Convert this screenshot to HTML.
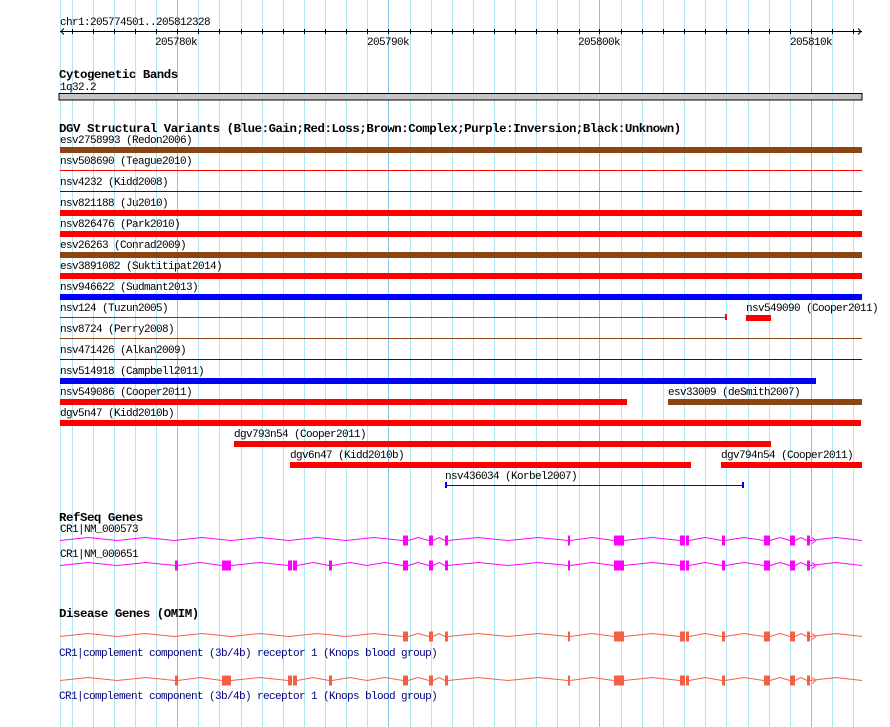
<!DOCTYPE html>
<html><head><meta charset="utf-8"><style>
html,body{margin:0;padding:0;background:#fff;width:890px;height:727px;overflow:hidden}
svg{display:block}
text{font-family:"Liberation Mono",monospace;font-size:11px;letter-spacing:-0.6px;fill:#000}
.h{font-weight:bold;font-size:12.4px;letter-spacing:-0.45px}
.n{fill:#000080}
</style></head><body>
<svg width="890" height="727" viewBox="0 0 890 727" xmlns="http://www.w3.org/2000/svg">
<defs>
<g id="t1">
<path d="M60 0 L88 -3 L117 0 L145 -3 L174 0 L202 -3 L231 0 L260 -3 L289 0 L317 -3 L346 0 L374 -3 L403 0 M408 0 L418 -3 L429 0 M433 0 L439 -3 L445 0 M448 0 L478 -3 L508 0 L538 -3 L568 0 M570 0 L592 -3 L614 0 M624 0 L652 -3 L680 0 M689 0 L705 -3 L722 0 M725 0 L744 -3 L764 0 M770 0 L780 -3 L790 0 M795 0 L801 -3 L807 0 M810 0 L836 -3 L862 0 M812 -3 L816 0 L812 3" fill="none" stroke="currentColor" stroke-width="1"/>
<g fill="currentColor">
<rect x="403" y="-5" width="5" height="10"/><rect x="429" y="-5" width="4" height="10"/><rect x="445" y="-5" width="3" height="10"/><rect x="568" y="-5" width="2" height="10"/><rect x="614" y="-5" width="10" height="10"/><rect x="680" y="-5" width="5" height="10"/><rect x="686" y="-5" width="3" height="10"/><rect x="722" y="-5" width="3" height="10"/><rect x="764" y="-5" width="6" height="10"/><rect x="790" y="-5" width="5" height="10"/><rect x="807" y="-5" width="3" height="10"/>
</g></g>
<g id="t2">
<path d="M60 0 L88 -3 L117 0 L146 -3 L175 0 M178 0 L200 -3 L222 0 M231 0 L260 -3 L288 0 M297 0 L313 -3 L329 0 M332 0 L350 -3 L367 0 L385 -3 L403 0 M408 0 L418 -3 L429 0 M433 0 L439 -3 L445 0 M448 0 L478 -3 L508 0 L538 -3 L568 0 M570 0 L592 -3 L614 0 M624 0 L652 -3 L680 0 M689 0 L705 -3 L722 0 M725 0 L744 -3 L764 0 M770 0 L780 -3 L790 0 M795 0 L801 -3 L807 0 M810 0 L836 -3 L862 0 M812 -3 L816 0 L812 3" fill="none" stroke="currentColor" stroke-width="1"/>
<g fill="currentColor">
<rect x="175" y="-5" width="3" height="10"/><rect x="222" y="-5" width="9" height="10"/><rect x="288" y="-5" width="4" height="10"/><rect x="293" y="-5" width="4" height="10"/><rect x="329" y="-5" width="3" height="10"/>
<rect x="403" y="-5" width="5" height="10"/><rect x="429" y="-5" width="4" height="10"/><rect x="445" y="-5" width="3" height="10"/><rect x="568" y="-5" width="2" height="10"/><rect x="614" y="-5" width="10" height="10"/><rect x="680" y="-5" width="5" height="10"/><rect x="686" y="-5" width="3" height="10"/><rect x="722" y="-5" width="3" height="10"/><rect x="764" y="-5" width="6" height="10"/><rect x="790" y="-5" width="5" height="10"/><rect x="807" y="-5" width="3" height="10"/>
</g></g>
</defs>
<g stroke="#aee8ee" stroke-width="1">
<line x1="60.5" y1="0" x2="60.5" y2="727"/>
<line x1="72.5" y1="0" x2="72.5" y2="727"/><line x1="93.5" y1="0" x2="93.5" y2="727"/><line x1="114.5" y1="0" x2="114.5" y2="727"/><line x1="135.5" y1="0" x2="135.5" y2="727"/><line x1="156.5" y1="0" x2="156.5" y2="727"/>
<line x1="198.5" y1="0" x2="198.5" y2="727"/><line x1="219.5" y1="0" x2="219.5" y2="727"/><line x1="241.5" y1="0" x2="241.5" y2="727"/><line x1="262.5" y1="0" x2="262.5" y2="727"/><line x1="283.5" y1="0" x2="283.5" y2="727"/><line x1="304.5" y1="0" x2="304.5" y2="727"/><line x1="325.5" y1="0" x2="325.5" y2="727"/><line x1="346.5" y1="0" x2="346.5" y2="727"/><line x1="367.5" y1="0" x2="367.5" y2="727"/>
<line x1="410.5" y1="0" x2="410.5" y2="727"/><line x1="431.5" y1="0" x2="431.5" y2="727"/><line x1="452.5" y1="0" x2="452.5" y2="727"/><line x1="473.5" y1="0" x2="473.5" y2="727"/><line x1="494.5" y1="0" x2="494.5" y2="727"/><line x1="515.5" y1="0" x2="515.5" y2="727"/><line x1="536.5" y1="0" x2="536.5" y2="727"/><line x1="557.5" y1="0" x2="557.5" y2="727"/><line x1="579.5" y1="0" x2="579.5" y2="727"/>
<line x1="621.5" y1="0" x2="621.5" y2="727"/><line x1="642.5" y1="0" x2="642.5" y2="727"/><line x1="663.5" y1="0" x2="663.5" y2="727"/><line x1="684.5" y1="0" x2="684.5" y2="727"/><line x1="705.5" y1="0" x2="705.5" y2="727"/><line x1="726.5" y1="0" x2="726.5" y2="727"/><line x1="748.5" y1="0" x2="748.5" y2="727"/><line x1="769.5" y1="0" x2="769.5" y2="727"/><line x1="790.5" y1="0" x2="790.5" y2="727"/>
<line x1="832.5" y1="0" x2="832.5" y2="727"/><line x1="853.5" y1="0" x2="853.5" y2="727"/>
</g>
<g stroke="#88c4e4" stroke-width="1">
<line x1="177.5" y1="0" x2="177.5" y2="727"/><line x1="388.5" y1="0" x2="388.5" y2="727"/><line x1="599.5" y1="0" x2="599.5" y2="727"/><line x1="811.5" y1="0" x2="811.5" y2="727"/>
</g>
<text x="60" y="25">chr1:205774501..205812328</text>
<g stroke="#000" stroke-width="1" fill="none">
<line x1="60" y1="31.5" x2="862" y2="31.5"/>
<path d="M64 28.5 L61 31.5 L64 34.5 M858 28.5 L861 31.5 L858 34.5"/>
<path d="M72.5 29v5M93.5 29v5M114.5 29v5M135.5 29v5M156.5 29v5M177.5 29v5M198.5 29v5M219.5 29v5M241.5 29v5M262.5 29v5M283.5 29v5M304.5 29v5M325.5 29v5M346.5 29v5M367.5 29v5M388.5 29v5M410.5 29v5M431.5 29v5M452.5 29v5M473.5 29v5M494.5 29v5M515.5 29v5M536.5 29v5M557.5 29v5M579.5 29v5M599.5 29v5M621.5 29v5M642.5 29v5M663.5 29v5M684.5 29v5M705.5 29v5M726.5 29v5M748.5 29v5M769.5 29v5M790.5 29v5M811.5 29v5M832.5 29v5M853.5 29v5"/>
</g>
<text x="155" y="45">205780k</text><text x="367" y="45">205790k</text><text x="578" y="45">205800k</text><text x="790" y="45">205810k</text>
<text class="h" x="59" y="78">Cytogenetic Bands</text>
<text x="60" y="90">1q32.2</text>
<rect x="59" y="93.5" width="803" height="6.5" fill="#c4c4c4" stroke="#000" stroke-width="1"/>
<text class="h" x="59" y="132">DGV Structural Variants (Blue:Gain;Red:Loss;Brown:Complex;Purple:Inversion;Black:Unknown)</text>
<text x="60" y="143">esv2758993 (Redon2006)</text><rect x="60" y="147" width="802" height="6" fill="#8b4513"/>
<text x="60" y="164">nsv508690 (Teague2010)</text><rect x="60" y="170" width="802" height="1" fill="#f00"/>
<text x="60" y="185">nsv4232 (Kidd2008)</text><rect x="60" y="191" width="802" height="1" fill="#00f"/>
<text x="60" y="206">nsv821188 (Ju2010)</text><rect x="60" y="210" width="802" height="6" fill="#f00"/>
<text x="60" y="227">nsv826476 (Park2010)</text><rect x="60" y="231" width="802" height="6" fill="#f00"/>
<text x="60" y="248">esv26263 (Conrad2009)</text><rect x="60" y="252" width="802" height="6" fill="#8b4513"/>
<text x="60" y="269">esv3891082 (Suktitipat2014)</text><rect x="60" y="273" width="802" height="6" fill="#f00"/>
<text x="60" y="290">nsv946622 (Sudmant2013)</text><rect x="60" y="294" width="802" height="6" fill="#00f"/>
<text x="60" y="311">nsv124 (Tuzun2005)</text><rect x="60" y="317" width="666" height="1" fill="#f00"/><rect x="725" y="314" width="2" height="6" fill="#f00"/>
<text x="746" y="311">nsv549090 (Cooper2011)</text><rect x="746" y="315" width="25" height="6" fill="#f00"/>
<text x="60" y="332">nsv8724 (Perry2008)</text><rect x="60" y="338" width="802" height="1" fill="#8b4513"/>
<text x="60" y="353">nsv471426 (Alkan2009)</text><rect x="60" y="359" width="802" height="1" fill="#00f"/>
<text x="60" y="374">nsv514918 (Campbell2011)</text><rect x="60" y="378" width="756" height="6" fill="#00f"/>
<text x="60" y="395">nsv549086 (Cooper2011)</text><rect x="60" y="399" width="567" height="6" fill="#f00"/>
<text x="668" y="395">esv33009 (deSmith2007)</text><rect x="668" y="399" width="194" height="6" fill="#8b4513"/>
<text x="60" y="416">dgv5n47 (Kidd2010b)</text><rect x="60" y="420" width="801" height="6" fill="#f00"/>
<text x="234" y="437">dgv793n54 (Cooper2011)</text><rect x="234" y="441" width="537" height="6" fill="#f00"/>
<text x="290" y="458">dgv6n47 (Kidd2010b)</text><rect x="290" y="462" width="401" height="6" fill="#f00"/>
<text x="721" y="458">dgv794n54 (Cooper2011)</text><rect x="721" y="462" width="141" height="6" fill="#f00"/>
<text x="445" y="479">nsv436034 (Korbel2007)</text><rect x="445" y="485" width="298" height="1" fill="#00f"/><rect x="445" y="482" width="2" height="6" fill="#00f"/><rect x="742" y="482" width="2" height="6" fill="#00f"/>
<text class="h" x="59" y="521">RefSeq Genes</text>
<text x="60" y="532">CR1|NM_000573</text>
<use href="#t1" x="0" y="540.5" style="color:#ff00ff"/>
<text x="60" y="557">CR1|NM_000651</text>
<use href="#t2" x="0" y="565.5" style="color:#ff00ff"/>
<text class="h" x="59" y="617">Disease Genes (OMIM)</text>
<use href="#t1" x="0" y="636.5" style="color:#f56045"/>
<text class="n" x="59" y="656">CR1|complement component (3b/4b) receptor 1 (Knops blood group)</text>
<use href="#t2" x="0" y="680.5" style="color:#f56045"/>
<text class="n" x="59" y="699">CR1|complement component (3b/4b) receptor 1 (Knops blood group)</text>
</svg>
</body></html>
